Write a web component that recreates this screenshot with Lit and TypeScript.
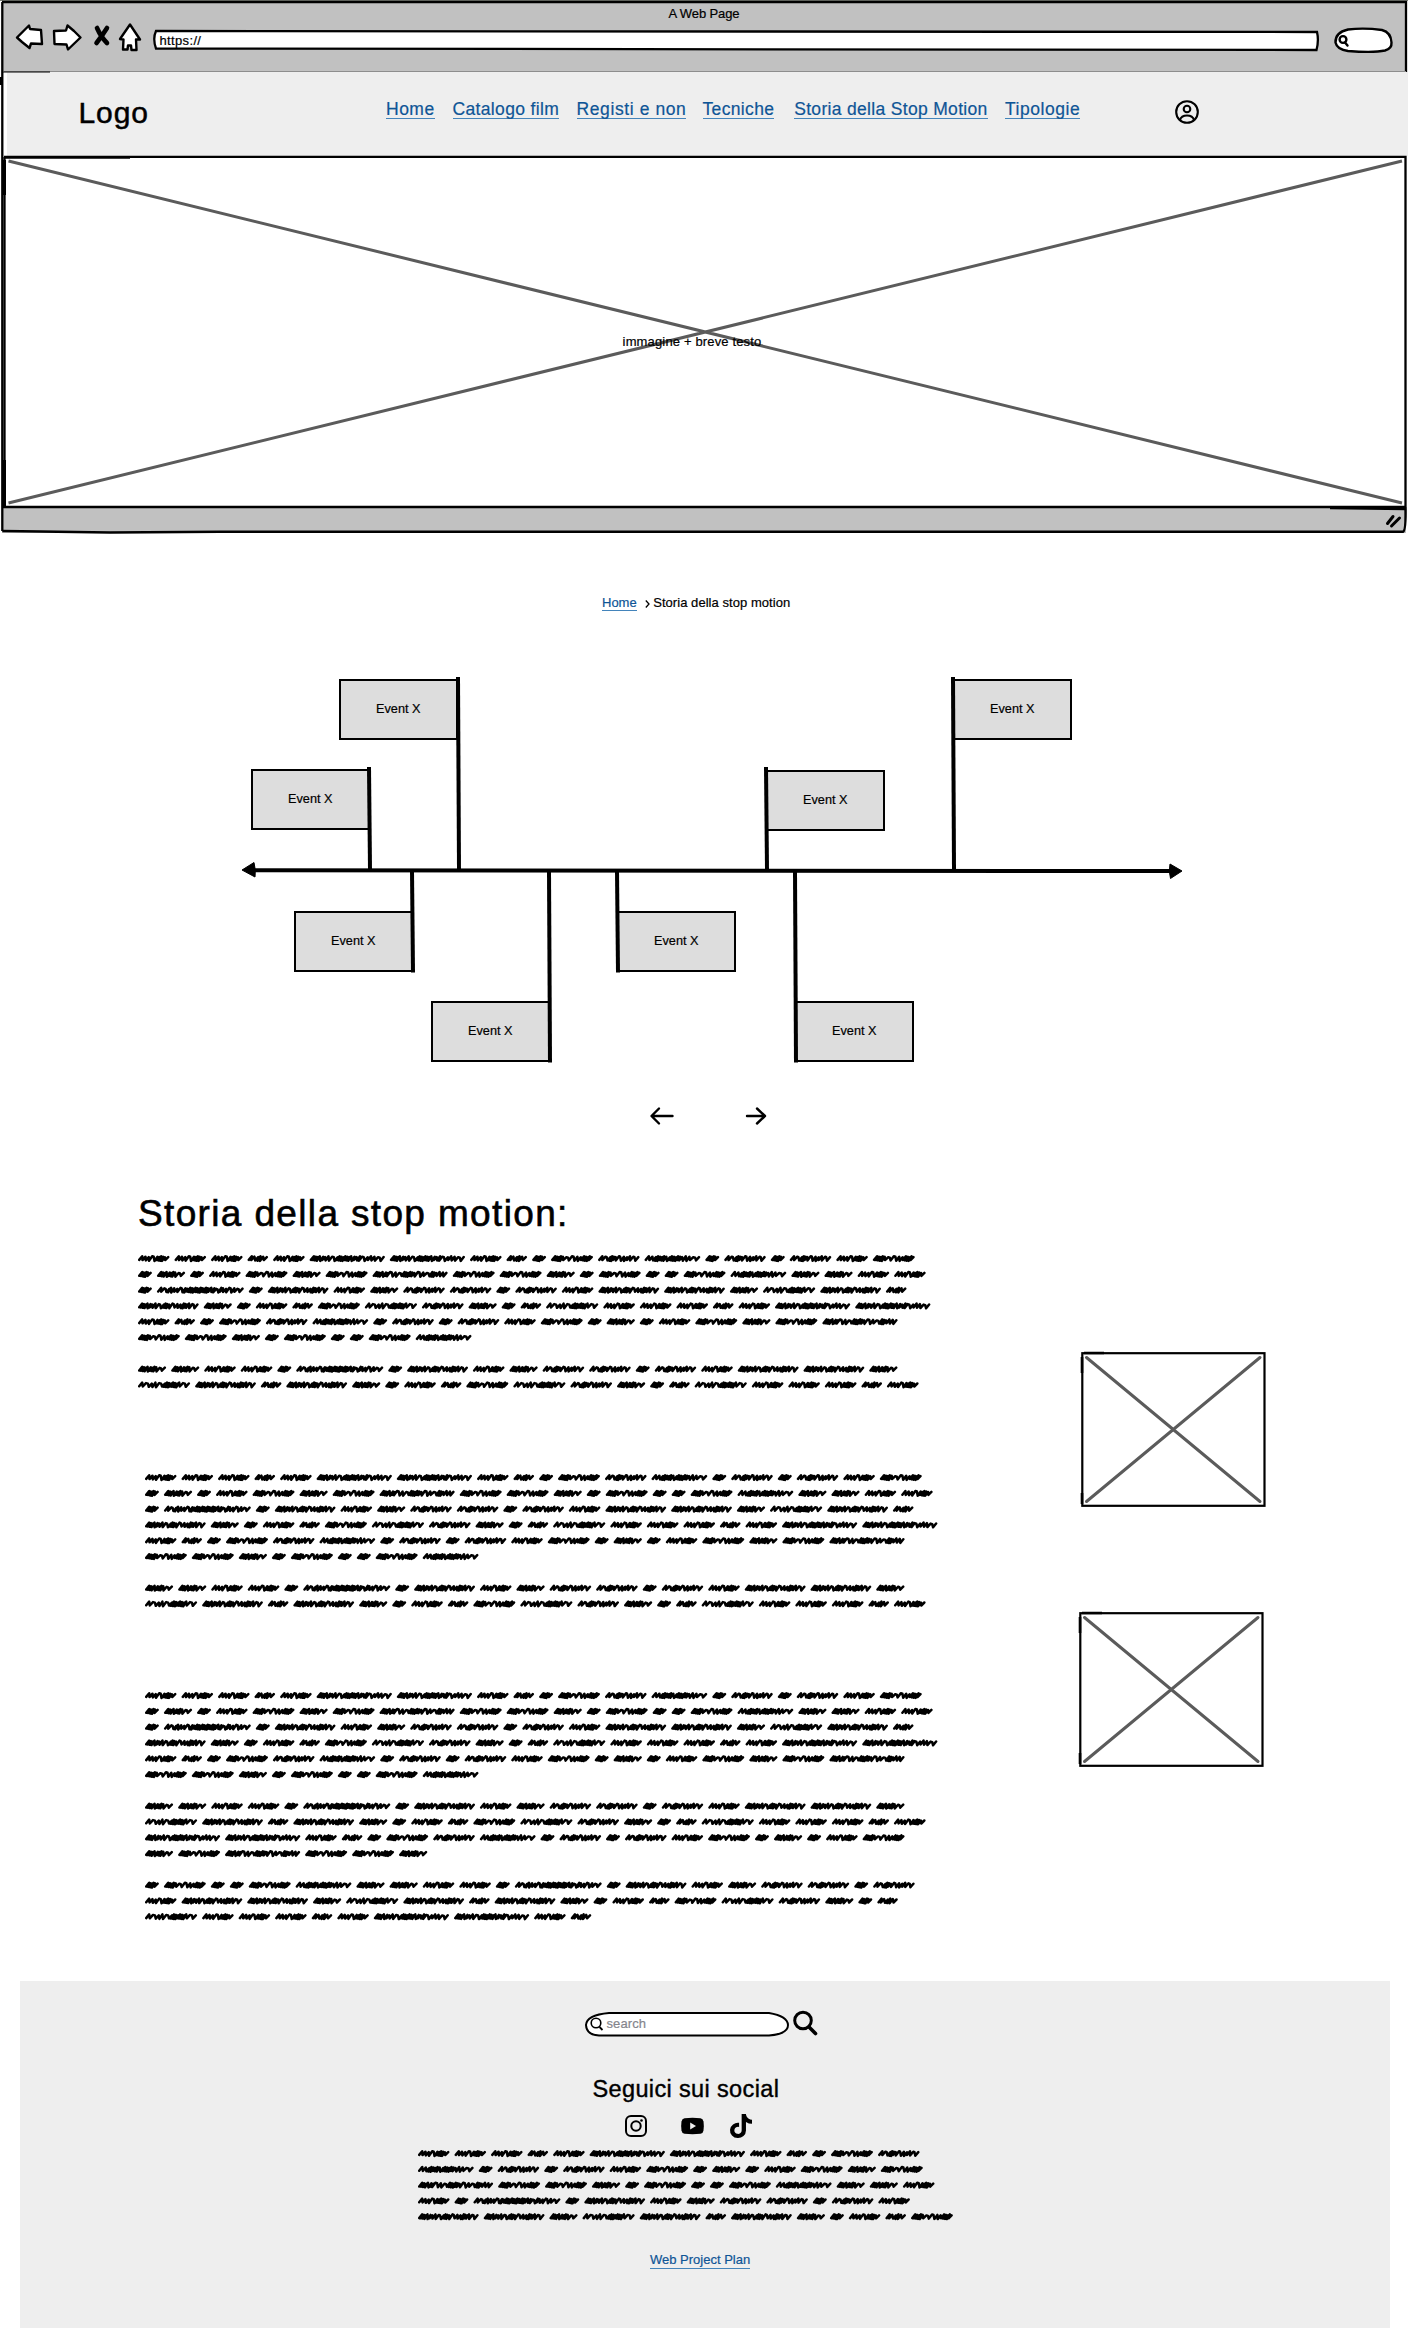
import { LitElement, html, css, svg } from "lit";
import { customElement, property } from "lit/decorators.js";

/* Stroke rhythm of every scribbled word: m = tight, i = regular, r = wide. */
const WORDS: Record<string, [number, string]> = {
  a: [13.8, "mmmmi"],
  b: [20.4, "iriir"],
  c: [28, "mmmimmmir"],
  d: [31.4, "iiirmmmmi"],
  e: [41.8, "mmmmirriimmmm"],
  E: [41.4, "irmmmiriiir"],
  f: [52, "iriirmmmmmmmir"],
  g: [55.6, "iimmmmmimmmmmmiiir"],
  h: [60.6, "mmmimiirmmmiriimmmir"],
  i: [75, "mmmimiirmmmmmmmimimriiir"],
  I: [75, "mmmimmrirmmmmmirirmmiii"],
  j: [86.8, "irmiiirmimmmmmmmmmmmmimrmiirir"],
};
const STEP: Record<string, number> = { m: 1.7, i: 3, r: 5 };
const GAP = 5.15;
const PITCH = 15.8;

function scribble(word: string, x0: number, y: number): string {
  const [width, rhythm] = WORDS[word];
  const total = [...rhythm].reduce((sum, k) => sum + STEP[k], 0);
  const scale = (width - 5.4) / total;
  let x = x0 + 1.2;
  let d = `M${x.toFixed(1)} ${(y + 1.6).toFixed(1)}`;
  [...rhythm].forEach((k, n) => {
    const step = STEP[k] * scale;
    const top = y - 2.1 + (n % 3) * 0.5;
    const bottom = y + 1.8 + ((n * 5) % 4) * 0.28;
    if (k === "r") {
      d += `L${(x + 3.2).toFixed(1)} ${top.toFixed(1)}L${(x + step * 0.85).toFixed(1)} ${(top + 0.5).toFixed(1)}`;
    } else {
      d += `L${(x + 3).toFixed(1)} ${top.toFixed(1)}`;
    }
    x += step;
    d += `L${x.toFixed(1)} ${bottom.toFixed(1)}`;
  });
  return d + `L${(x + 3).toFixed(1)} ${(y - 1.2).toFixed(1)}`;
}

@customElement("scribble-block")
class ScribbleBlock extends LitElement {
  @property({ attribute: false }) lines: string[] = [];

  static styles = css`
    :host { display: block; }
    svg { display: block; }
    path { fill: none; stroke: #000; stroke-width: 2.5; stroke-linecap: round; stroke-linejoin: round; }
  `;

  render() {
    const height = this.lines.length * PITCH;
    return html`<svg width="806" height=${height} aria-hidden="true">
      ${this.lines.map((line, row) => {
        let x = 0;
        const d = [...line].map((w) => {
          const part = scribble(w, x, row * PITCH + 8.3);
          x += WORDS[w][0] + GAP;
          return part;
        });
        return svg`<path d=${d.join("")}></path>`;
      })}
    </svg>`;
  }
}

const OPENING = [
  "dddbdiidbaeEgaEaEde",
  "acadeceIeecaeaaegccdd",
  "ajahdcEEaEdhhcfhb",
  "hcadbefEcabfdddbdii",
  "dbaeEgaEaEdeacadeceI",
  "eecaeaaeg",
  "",
  "ccddajahdcEEaEdhhc",
  "fhbhcadbefEcabfdddbd",
];
const CLOSING = [
  "iidbaeEgaEaEdeacade",
  "ceIeec",
  "",
  "aeaaegccddajahdcEEaE",
  "dhhcfhbhcadbefEcab",
  "fdddbdiidb",
];
const FOOTER_LINES = ["dddbdiidbaeE", "gaEaEdeacadece", "Ieecaeaaegccd", "dajahdcEEaEd", "hhcfhbhcadbe"];

const NAV = ["Home", "Catalogo film", "Registi e non", "Tecniche", "Storia della Stop Motion", "Tipologie"];

interface TimelineEvent { x: number; y: number; pole: number; up: boolean; }
const EVENTS: TimelineEvent[] = [
  { x: 119, y: 19, pole: 238, up: true },
  { x: 31, y: 109, pole: 149, up: true },
  { x: 546, y: 110, pole: 546, up: true },
  { x: 733, y: 19, pole: 733, up: true },
  { x: 74, y: 251, pole: 192, up: false },
  { x: 211, y: 341, pole: 329, up: false },
  { x: 397, y: 251, pole: 397, up: false },
  { x: 575, y: 341, pole: 575, up: false },
];

@customElement("app-root")
class AppRoot extends LitElement {
  static styles = css`
    :host {
      display: block;
      width: 1408px;
      height: 2328px;
      overflow: hidden;
      background: #fff;
      color: #000;
      font-family: "Liberation Sans", Arial, sans-serif;
      font-size: 13px;
      line-height: 18px;
      -webkit-text-stroke: 0.2px currentColor;
    }
    * { box-sizing: border-box; }
    svg { display: block; overflow: visible; }
    a { color: #0e5596; text-decoration: none; }

    .browser { position: relative; height: 533px; }
    .frame { position: absolute; left: 0; top: 0; pointer-events: none; }
    .chrome { height: 72px; margin: 0 2px; padding-top: 5px; background: #c1c1c1; }
    .title { text-align: center; letter-spacing: -0.1px; height: 19px; }
    .tools { display: flex; align-items: center; padding-left: 12px; height: 32px; }
    .address { width: 1166px; height: 22px; padding: 0 0 0 6.500px; letter-spacing: 0.35px; line-height: 22px; position: relative; margin: 1px 0 0 13px; }
    .address svg { position: absolute; inset: 0; }
    .address span { position: relative; }
    .find { margin-left: 15px; }

    .header { height: 84px; margin-left: 7px; background: #eee; display: flex; }
    .logo { width: 379px; padding: 21px 0 0 71.500px; font-size: 30px; line-height: 40px; letter-spacing: 0.9px; -webkit-text-stroke-width: 0.5px; }
    .nav { display: grid; grid-template-columns: 66.5px 124px 126px 91.7px 210.8px 178.5px; padding-top: 27px; font-size: 17.5px; line-height: 20px; white-space: nowrap; }
    .nav a { justify-self: start; height: 20px; border-bottom: 1.5px solid #4384bb; }
    .nav a:nth-child(1) { letter-spacing: 0.5px; }
    .nav a:nth-child(2) { letter-spacing: 0.35px; }
    .nav a:nth-child(3) { letter-spacing: 0.6px; }
    .nav a:nth-child(4) { letter-spacing: 0.35px; }
    .nav a:nth-child(5) { letter-spacing: 0.32px; }
    .nav a:nth-child(6) { letter-spacing: 0.55px; }
    .user { margin: 28px 0 0 -8px; }

    .hero { height: 351px; padding: 177px 24px 0 0; text-align: center; letter-spacing: 0.15px; }
    .hero span { position: relative; z-index: 1; }
    .status { height: 26px; margin: 0 2px; background: #c1c1c1; }

    .crumbs { display: flex; padding: 61px 0 0 602px; height: 127px; }
    .crumbs a { height: 17px; border-bottom: 1.5px solid #4384bb; }
    .crumbs .sep { margin: 2px 0 0 8px; }
    .crumbs .here { margin-left: 3.500px; letter-spacing: 0.050px; }

    .timeline { position: relative; width: 968px; height: 420px; margin-left: 220px; }
    .axis { position: absolute; left: 0; top: 0; }
    .event { position: absolute; width: 118.5px; height: 61px; background: #ddd; border: 2px solid #000; display: flex; align-items: center; justify-content: center; font-size: 12.7px; padding-bottom: 1px; }

    .pager { display: flex; gap: 72px; align-items: center; padding-left: 650px; height: 72px; }

    .article { display: grid; grid-template-columns: 942px auto; height: 829px; padding: 38px 0 0 138px; }
    h1 { margin: 0; font-weight: 400; font-size: 37px; line-height: 48px; letter-spacing: 1.35px; height: 60px; -webkit-text-stroke-width: 0.6px; }
    .second, .third { padding: 77.3px 0 0 6.800px; }
    .third { padding-top: 75px; }
    .shot.first { margin: 161.500px 0 0 1px; }
    .shot.next { margin: 105px 0 0 -1px; }

    .footer { height: 347px; margin: 0 18px 0 20px; background: #eee; display: flex; flex-direction: column; align-items: flex-start; }
    .search { display: flex; align-items: center; margin: 28px 0 0 564.500px; height: 30px; }
    .pill { position: relative; width: 204px; height: 26px; padding-left: 22px; line-height: 25px; color: #85858c; letter-spacing: 0.1px; }
    .pill svg { position: absolute; left: 0; top: 0; }
    .pill span { position: relative; }
    .glass { margin: -2px 0 0 4px; }
    h2 { margin: 37px 0 0 572.500px; font-weight: 400; font-size: 23.5px; line-height: 26px; letter-spacing: 0.36px; -webkit-text-stroke-width: 0.4px; }
    .social { display: flex; align-items: center; margin: 8px 0 1px 603.500px; height: 32px; }
    .social .yt { margin-left: 33.500px; }
    .social .tt { margin-left: 26px; }
    .notes { margin: 2px 0 0 398px; }
    .plan { margin: 27px 0 0 630px; height: 18px; border-bottom: 1.5px solid #4384bb; }
  `;

  private shot(cls: string) {
    return html`<svg class="shot ${cls}" width="185" height="155">
      <rect x="1.3" y="1.2" width="182.2" height="152.6" fill="#fff" stroke="#000" stroke-width="2.2"></rect>
      <path d="M1 5V21M3 1H23M1 141V152" stroke="#000" stroke-width="2.6"></path>
      <path d="M5.5 5.5 179 149.500M179 5.500 5.500 149.500" stroke="#5b5b5b" stroke-width="3" stroke-linecap="round"></path>
    </svg>`;
  }

  render() {
    return html`
      <div class="browser">
        <div class="chrome">
          <div class="title">A Web Page</div>
          <div class="tools">
            <svg width="126" height="32" fill="#fff" stroke="#000" stroke-width="2.4" stroke-linejoin="round">
              <path d="M3 13.500 15 1.500 16 5 27 6 28 20 17 19.500 15.500 24 8 18Z"></path>
              <path d="M40 7 52 6.500 53.500 1.500 60 7 66.500 13.500 54 25.500 52.500 20.500 40.500 20Z"></path>
              <path d="M83 4Q87 13 93 19M93 4Q88 12 82.500 19" stroke-width="4.600" stroke-linecap="round"></path>
              <path d="M116 .5 106 15 109.500 15.500 109 25.500 113.500 25.500 114 21.500 117 21.500 117.500 26 122.500 26 122 15.500 126 15.500Z"></path>
            </svg>
            <div class="address">
              <svg width="1166" height="22"><path d="M3 1 1164 2Q1166 10.500 1163.500 20L3 18.500Q-.5 8.500 3 1Z" fill="#fff" stroke="#000" stroke-width="2.300"></path></svg>
              <span>https://</span>
            </div>
            <svg class="find" width="60" height="26" fill="#fff" stroke="#000" stroke-width="2.400" stroke-linecap="round">
              <path d="M14 2.500Q30 .5 48 3Q57 5.500 57.500 15.500Q58 21.500 51 23.500Q40 26 14 24Q3 22.500 1.500 15.500Q1 5.500 14 2.500Z"></path>
              <circle cx="9" cy="12.500" r="3.400"></circle><path d="M11 15.500 13.500 18.500"></path>
            </svg>
          </div>
        </div>
        <div class="header">
          <div class="logo">Logo</div>
          <nav class="nav">${NAV.map((label) => html`<a href="#">${label}</a>`)}</nav>
          <svg class="user" width="24" height="24" fill="none" stroke="#000" stroke-width="2.100">
            <circle cx="12" cy="12" r="10.800"></circle>
            <circle cx="12" cy="9" r="3.300"></circle>
            <path d="M5 20C6 16.500 8.500 15.500 12 15.500S18 16.500 19 20"></path>
          </svg>
        </div>
        <div class="hero"><span>immagine + breve testo</span></div>
        <div class="status"></div>
        <svg class="frame" width="1408" height="534" fill="none" stroke="#000" stroke-width="2.300">
          <path d="M0 .5H1408" stroke="#7c8078" stroke-width="1"></path>
          <path d="M2 2H1406V72M2.300 2V200L2.300 531"></path>
          <path d="M3 71.500H1406" stroke="#8d8d8d" stroke-width="1"></path>
          <path d="M3 72H50" stroke-width="1"></path>
          <path d="M1.200 77V85M4.500 160V195M4.500 460V506" stroke-width="3"></path>
          <path d="M4 156.800H1405.500V507M4.500 157V507M5 157.500H130"></path>
          <path d="M3 507H1406M1330 508 1405.500 509"></path>
          <path d="M2.300 531 40 531.500 110 532.500 220 531.700H1403Q1406 531 1405.500 507" stroke-width="2.500"></path>
          <path d="M8.500 161 1402 503M1402 161 8.500 503" stroke="#5b5b5b" stroke-width="3"></path>
          <path d="M1387.500 523.500 1393 516.500M1391.500 526 1399.500 518" stroke-width="3" stroke-linecap="round"></path>
        </svg>
      </div>

      <nav class="crumbs">
        <a href="#">Home</a>
        <svg class="sep" width="5" height="14" fill="none" stroke="#000" stroke-width="1.300"><path d="M.8 4.500 4 8 .8 11.500"></path></svg>
        <span class="here">Storia della stop motion</span>
      </nav>

      <section class="timeline">
        ${EVENTS.map((e) => html`<div class="event" style="left:${e.x}px;top:${e.y}px">Event X</div>`)}
        <svg class="axis" width="968" height="420" stroke="#000" stroke-width="4">
          <path d="M32 210.300 958 211"></path>
          <path d="M22 210 34 202.500Q36 210 35 217ZM962 211 950 204Q948.500 211 950.500 218.500Z" stroke-width="1" stroke-linejoin="round"></path>
          ${EVENTS.map((e) => {
            const end = e.up ? e.y - (e.x === 546 ? 3 : 2) : e.y + 61.5;
            return svg`<path d=${e.up ? `M${e.pole} ${end}L${e.pole + 1} 210` : `M${e.pole} 211L${e.pole + 1} ${end}`}></path>`;
          })}
        </svg>
      </section>

      <div class="pager">
        <svg width="24" height="20" fill="none" stroke="#000" stroke-width="2.400" stroke-linecap="round" stroke-linejoin="round"><path d="M22.500 10H2M9 2.500 1.500 10 9 17.500"></path></svg>
        <svg width="21" height="20" fill="none" stroke="#000" stroke-width="2.400" stroke-linecap="round" stroke-linejoin="round"><path d="M1 10H19M11 2.500 19 10 11 17.500"></path></svg>
      </div>

      <section class="article">
        <div>
          <h1>Storia della stop motion:</h1>
          <scribble-block .lines=${OPENING}></scribble-block>
          <scribble-block class="second" .lines=${OPENING}></scribble-block>
          <scribble-block class="third" .lines=${[...OPENING, ...CLOSING]}></scribble-block>
        </div>
        <div>${this.shot("first")} ${this.shot("next")}</div>
      </section>

      <footer class="footer">
        <div class="search">
          <div class="pill">
            <svg width="204" height="26" fill="none" stroke="#000" stroke-width="2">
              <path d="M24 2H184Q202.500 5 203 14Q203 23 184 24.500H14Q1.500 24 1 14Q1.500 4 24 2Z" fill="#fff"></path>
              <circle cx="11" cy="12" r="4.800" stroke-width="1.600"></circle><path d="M14.500 16 17.500 19" stroke-width="1.800"></path>
            </svg>
            <span>search</span>
          </div>
          <svg class="glass" width="25" height="26" fill="none" stroke="#000" stroke-width="3"><circle cx="10" cy="10.500" r="8.300"></circle><path d="M16 17 22.500 23.500" stroke-width="3.600" stroke-linecap="round"></path></svg>
        </div>
        <h2>Seguici sui social</h2>
        <div class="social">
          <svg width="24" height="24" fill="none" stroke="#000" stroke-width="2"><rect x="2" y="2" width="20" height="20" rx="5"></rect><circle cx="12" cy="12" r="4.700"></circle><circle cx="17.500" cy="6.500" r="1.300" fill="#000" stroke="none"></circle></svg>
          <svg class="yt" width="23" height="24"><path d="M3.500 4.200Q11.500 3.300 19.500 4.200 22 4.500 22.500 7.500 23.200 12 22.500 16.500 22 19.500 19.500 19.800 11.500 20.700 3.500 19.800 1 19.500 .5 16.500-.2 12 .5 7.500 1 4.500 3.500 4.200Z"></path><path d="M9.200 8.600 15 12 9.200 15.400Z" fill="#eee"></path></svg>
          <svg class="tt" width="22" height="24" viewBox="0 0 448 512" preserveAspectRatio="none"><path d="M448 209.900a210 210 0 0 1-122.800-39.300V349.400A162.600 162.600 0 1 1 185 188.300V278.200a74.600 74.600 0 1 0 52.200 71.200V0l88 0a121 121 0 0 0 1.900 22.200h0A122 122 0 0 0 381 102.400a121 121 0 0 0 67 20.100z"></path></svg>
        </div>
        <scribble-block class="notes" .lines=${FOOTER_LINES}></scribble-block>
        <a class="plan" href="#">Web Project Plan</a>
      </footer>
    `;
  }
}
